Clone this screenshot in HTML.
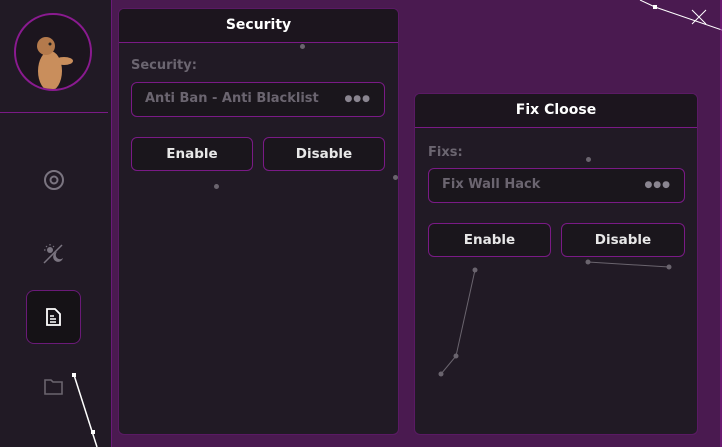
<!DOCTYPE html>
<html><head><style>
*{margin:0;padding:0;box-sizing:border-box}
body{width:722px;height:447px;overflow:hidden;background:#4a1a50;font-family:"DejaVu Sans","Liberation Sans",sans-serif;position:relative}
.side{position:absolute;left:0;top:0;width:112px;height:447px;background:#211a25;border-right:1.5px solid #6a1a78}
.av{position:absolute;left:14px;top:13px;width:78px;height:78px;border-radius:50%;border:2px solid #8a1a90;background:#1c151e;overflow:hidden}
.hr{position:absolute;left:0;top:112px;width:108px;height:1px;background:#7a1a86}
.panel{position:absolute;background:#211a25;border:1px solid #5a1a64;border-radius:6px;overflow:hidden}
.hd{height:34px;background:#1c151e;border-bottom:1px solid #7a1a86;color:#fff;font-weight:bold;font-size:14px;text-align:center;line-height:32px}
.lbl{position:absolute;color:#6b6570;font-weight:bold;font-size:13px}
.inp{position:absolute;height:35px;border:1px solid #7a1a86;border-radius:6px;background:#1a161c;color:#6b6570;font-weight:bold;font-size:13px;line-height:32px;padding-left:13px}
.inp span{position:absolute;right:13px;top:0;color:#8a8590;font-size:9px;letter-spacing:1px}
.btn{position:absolute;height:34px;border:1px solid #7a1a86;border-radius:6px;background:#1a161c;color:#e8e8e8;font-weight:bold;font-size:13.5px;text-align:center;line-height:32px}
.dot{position:absolute;width:5px;height:5px;border-radius:50%;background:#6a646e}
</style></head><body>
<div class="side">
 <div class="av"><svg width="78" height="78"><ellipse cx="34" cy="56" rx="12" ry="20" fill="#c98e5c"/><ellipse cx="30" cy="31" rx="9" ry="9" fill="#b47a4c"/><ellipse cx="48" cy="46" rx="9" ry="4" fill="#c98e5c"/><circle cx="34" cy="29" r="1.5" fill="#222"/></svg></div>
 <div class="hr"></div>
 <svg style="position:absolute;left:43px;top:169px" width="22" height="22"><circle cx="11" cy="11" r="9" fill="none" stroke="#7a7480" stroke-width="2"/><circle cx="11" cy="11" r="3.5" fill="none" stroke="#7a7480" stroke-width="2"/></svg>
 <svg style="position:absolute;left:42px;top:241px" width="24" height="24"><line x1="2" y1="22" x2="20" y2="4" stroke="#7a7480" stroke-width="1.5"/><circle cx="8" cy="9" r="3" fill="#7a7480"/><path d="M8 3v1.5M2 9h1.5M4 5l1 1M12 5l-1 1" stroke="#7a7480" stroke-width="1.2"/><path d="M21 17a5 5 0 1 1-6-6 4 4 0 0 0 6 6z" fill="#7a7480"/></svg>
 <div style="position:absolute;left:26px;top:290px;width:55px;height:54px;border:1px solid #6a1a78;border-radius:8px;background:#151216"></div>
 <svg style="position:absolute;left:45px;top:308px" width="16" height="18"><path d="M2 1h8l5 5v11H2z" fill="none" stroke="#fff" stroke-width="1.8"/><path d="M5 8h4M5 11h6M5 14h6" stroke="#fff" stroke-width="1.5"/></svg>
 <svg style="position:absolute;left:44px;top:378px" width="20" height="18"><path d="M1 2h6l2 2h9v12H1z" fill="none" stroke="#6a646e" stroke-width="1.6"/></svg>
</div>
<div class="panel" style="left:118px;top:8px;width:281px;height:427px">
 <div class="hd">Security</div>
 <div class="lbl" style="left:12px;top:49px">Security:</div>
 <div class="inp" style="left:12px;top:73px;width:254px">Anti Ban - Anti Blacklist<span>●●●</span></div>
 <div class="btn" style="left:12px;top:128px;width:122px">Enable</div>
 <div class="btn" style="left:144px;top:128px;width:122px">Disable</div>
</div>
<div class="panel" style="left:414px;top:93px;width:284px;height:342px">
 <div class="hd">Fix Cloose</div>
 <div class="lbl" style="left:13px;top:51px">Fixs:</div>
 <div class="inp" style="left:13px;top:74px;width:257px">Fix Wall Hack<span>●●●</span></div>
 <div class="btn" style="left:13px;top:129px;width:123px">Enable</div>
 <div class="btn" style="left:146px;top:129px;width:124px">Disable</div>
</div>
<div class="dot" style="left:300px;top:44px"></div>
<div class="dot" style="left:214px;top:184px"></div>
<div class="dot" style="left:393px;top:175px"></div>
<div class="dot" style="left:586px;top:157px"></div>
<svg style="position:absolute;left:0;top:0" width="722" height="447">
<polyline points="441,374 456,356 475,270" fill="none" stroke="#6a646e" stroke-width="1"/>
<circle cx="441" cy="374" r="2.5" fill="#6a646e"/><circle cx="456" cy="356" r="2.5" fill="#6a646e"/><circle cx="475" cy="270" r="2.5" fill="#6a646e"/>
<line x1="588" y1="262" x2="669" y2="267" stroke="#6a646e"/><circle cx="588" cy="262" r="2.5" fill="#6a646e"/><circle cx="669" cy="267" r="2.5" fill="#6a646e"/>
<polyline points="640,0 655,7 722,30" fill="none" stroke="#fff" stroke-width="1"/><rect x="653" y="5" width="4" height="4" fill="#fff"/>
<path d="M692 10l14 14M706 10l-14 14" stroke="#fff" stroke-width="1"/>
<line x1="74" y1="375" x2="97" y2="447" stroke="#fff" stroke-width="1.5"/><rect x="72" y="373" width="4" height="4" fill="#fff"/><rect x="91" y="430" width="4" height="4" fill="#fff"/>
<line x1="721" y1="0" x2="721" y2="447" stroke="#8a1a90"/>
</svg>
</body></html>
